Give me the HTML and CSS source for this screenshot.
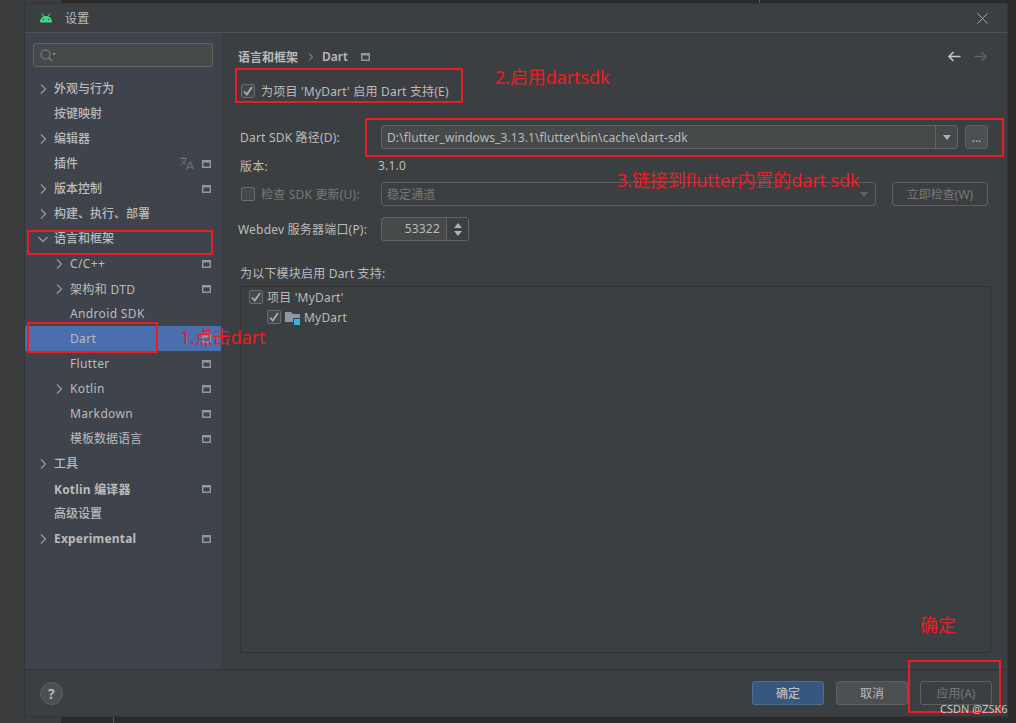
FILE: index.html
```html
<!DOCTYPE html>
<html lang="zh-CN">
<head>
    <meta charset="UTF-8">
    <title>设置</title>
    <link rel="stylesheet" href="styles.css">
</head>
<body>

<svg class="sprites" width="0" height="0">
    <symbol id="i-right" viewBox="0 0 10 10"><path d="M3 .5l4.500 4.500-4.500 4.500" fill="none" stroke="#9aa0a4" stroke-width="1.100"/></symbol>
    <symbol id="i-down" viewBox="0 0 10 10"><path d="M.5 3l4.500 4.500L9.500 3" fill="none" stroke="#9aa0a4" stroke-width="1.100"/></symbol>
    <symbol id="i-project" viewBox="0 0 9 8"><path fill="#8c98a3" fill-rule="evenodd" d="M0 0h9v8H0zM1.500 2.500V6.500h6V2.500z"/></symbol>
    <symbol id="i-check" viewBox="0 0 14 14"><path d="M3 7.500l2.800 3L11 3" fill="none" stroke="#a9adb0" stroke-width="1.800"/></symbol>
</svg>

<div class="dialog">
    <header class="titlebar">
        <svg class="android" width="14" height="10" viewBox="0 0 14 10">
            <path fill="#3ddc84" d="M1 9.500C1 5.500 3.500 3 7 3s6 2.500 6 6.500z"/>
            <path d="M3 .5l1.800 3M11 .5L9.200 3.500" stroke="#3ddc84" stroke-width="1"/>
            <circle cx="4.500" cy="6.500" r=".8" fill="#3c3f41"/><circle cx="9.500" cy="6.500" r=".8" fill="#3c3f41"/>
        </svg>
        <span class="title">设置</span>
        <svg class="close" width="11" height="11" viewBox="0 0 11 11"><path d="M.5.5l10 10M10.500.5l-10 10" stroke="#a8abad" stroke-width="1"/></svg>
    </header>

    <div class="body">
        <aside class="sidebar">
            <div class="search">
                <svg width="16" height="13" viewBox="0 0 16 13">
                    <circle cx="5.500" cy="5.500" r="4.500" fill="none" stroke="#7f8487" stroke-width="1.100"/>
                    <path d="M9 9l3 3" stroke="#7f8487" stroke-width="1.200"/>
                    <path d="M12 4h4l-2 2.500z" fill="#7f8487"/>
                </svg>
            </div>
            <ul class="tree">
                <li class="row top"><svg class="chev"><use href="#i-right"/></svg><span class="label zh">外观与行为</span></li>
                <li class="row top"><span class="chev"></span><span class="label zh">按键映射</span></li>
                <li class="row top"><svg class="chev"><use href="#i-right"/></svg><span class="label zh">编辑器</span></li>
                <li class="row top"><span class="chev"></span><span class="label zh">插件</span>
                    <svg class="translate" width="14" height="14" viewBox="0 0 14 14">
                        <path d="M0 2.500h7M3.500 1v1.500M6 2.500C5 6 3 8 .5 9M2 4.500c1 2 2.500 3.500 4 4" fill="none" stroke="#6e7478" stroke-width="1"/>
                        <path d="M6.500 13.500L9.700 6h.6l3.200 7.500M7.700 11.300h4.600" fill="none" stroke="#6e7478" stroke-width="1.100"/>
                    </svg>
                    <svg class="proj"><use href="#i-project"/></svg></li>
                <li class="row top"><svg class="chev"><use href="#i-right"/></svg><span class="label zh">版本控制</span><svg class="proj"><use href="#i-project"/></svg></li>
                <li class="row top"><svg class="chev"><use href="#i-right"/></svg><span class="label zh">构建、执行、部署</span></li>
                <li class="row top"><svg class="chev"><use href="#i-down"/></svg><span class="label zh">语言和框架</span></li>
                <li class="row sub"><svg class="chev"><use href="#i-right"/></svg><span class="label">C/C++</span><svg class="proj"><use href="#i-project"/></svg></li>
                <li class="row sub"><svg class="chev"><use href="#i-right"/></svg><span class="label">架构和 DTD</span><svg class="proj"><use href="#i-project"/></svg></li>
                <li class="row sub"><span class="chev"></span><span class="label">Android SDK</span></li>
                <li class="row sub selected"><span class="chev"></span><span class="label">Dart</span><svg class="proj"><use href="#i-project"/></svg></li>
                <li class="row sub"><span class="chev"></span><span class="label">Flutter</span><svg class="proj"><use href="#i-project"/></svg></li>
                <li class="row sub"><svg class="chev"><use href="#i-right"/></svg><span class="label">Kotlin</span><svg class="proj"><use href="#i-project"/></svg></li>
                <li class="row sub"><span class="chev"></span><span class="label">Markdown</span><svg class="proj"><use href="#i-project"/></svg></li>
                <li class="row sub"><span class="chev"></span><span class="label zh">模板数据语言</span><svg class="proj"><use href="#i-project"/></svg></li>
                <li class="row top"><svg class="chev"><use href="#i-right"/></svg><span class="label zh">工具</span></li>
                <li class="row top"><span class="chev"></span><span class="label strong">Kotlin 编译器</span><svg class="proj"><use href="#i-project"/></svg></li>
                <li class="row top"><span class="chev"></span><span class="label zh">高级设置</span></li>
                <li class="row top"><svg class="chev"><use href="#i-right"/></svg><span class="label strong">Experimental</span><svg class="proj"><use href="#i-project"/></svg></li>
            </ul>
        </aside>

        <main class="content">
            <div class="crumbs">
                <span>语言和框架</span>
                <svg class="crumb-sep" width="6" height="8" viewBox="0 0 6 8"><path d="M1 .5L4.500 4 1 7.500" fill="none" stroke="#9aa0a4"/></svg>
                <span>Dart</span>
                <svg class="proj crumb-proj"><use href="#i-project"/></svg>
                <span class="nav-arrows">
                    <svg width="14" height="11" viewBox="0 0 14 11"><path d="M13.500 5.500H2M6.500 1L2 5.500 6.500 10" fill="none" stroke="#c4c7c9" stroke-width="1.600"/></svg>
                    <svg width="14" height="11" viewBox="0 0 14 11"><path d="M.5 5.500H12M7.500 1L12 5.500 7.500 10" fill="none" stroke="#5d6164" stroke-width="1.600"/></svg>
                </span>
            </div>

            <label class="check-line enable">
                <span class="box"><svg width="14" height="14"><use href="#i-check"/></svg></span>
                为项目 'MyDart' 启用 Dart 支持(E)
            </label>

            <div class="form">
                <div class="form-label sdk-label">Dart SDK 路径(D):</div>
                <div class="sdk-field">
                    <div class="combo">
                        <span class="combo-text">D:\flutter_windows_3.13.1\flutter\bin\cache\dart-sdk</span>
                        <span class="combo-arrow"><i class="tri"></i></span>
                    </div>
                    <button class="dots">...</button>
                </div>

                <div class="form-label version-label">版本:</div>
                <div class="version">3.1.0</div>

                <label class="check-line form-label update off">
                    <span class="box"></span>
                    检查 SDK 更新(U):
                </label>
                <div class="sdk-field update-field">
                    <div class="combo off">
                        <span class="combo-text">稳定通道</span>
                        <span class="combo-arrow plain"><i class="tri"></i></span>
                    </div>
                    <button class="btn off check-now">立即检查(W)</button>
                </div>

                <div class="form-label port-label">Webdev 服务器端口(P):</div>
                <div class="spinner">
                    <span class="spin-value">53322</span>
                    <span class="spin-arrows"><i class="tri up"></i><i class="tri"></i></span>
                </div>
            </div>

            <div class="modules-title">为以下模块启用 Dart 支持:</div>
            <div class="modules">
                <label class="check-line mod">
                    <span class="box"><svg width="14" height="14"><use href="#i-check"/></svg></span>
                    项目 'MyDart'
                </label>
                <label class="check-line mod mod-child">
                    <span class="box"><svg width="14" height="14"><use href="#i-check"/></svg></span>
                    <svg class="folder" width="16" height="16" viewBox="0 0 16 16">
                        <path fill="#8c98a3" d="M0 3h6l2 2h7v8H0z"/>
                        <rect x="8" y="9" width="8" height="7" fill="#3c3f41"/>
                        <rect x="9" y="10" width="6" height="6" fill="#3bb1dc"/>
                    </svg>
                    MyDart
                </label>
            </div>
        </main>
    </div>

    <footer class="footer">
        <span class="help">?</span>
        <button class="btn primary">确定</button>
        <button class="btn">取消</button>
        <button class="btn off">应用(A)</button>
    </footer>
</div>

<!-- red marks drawn over the screenshot -->
<div class="mark mark-enable"></div>
<div class="mark mark-sdk"></div>
<div class="mark mark-lang"></div>
<div class="mark mark-dart"></div>
<div class="mark mark-apply"></div>
<div class="note note-1">1.点击dart</div>
<div class="note note-2">2.启用dartsdk</div>
<div class="note note-3">3.链接到flutter内置的dart sdk</div>
<div class="note note-4">确定</div>
<div class="watermark">CSDN @ZSK6</div>

</body>
</html>
```

FILE: styles.css
```css
* {
    box-sizing: border-box;
}

html, body {
    height: 100%;
}

body {
    margin: 0;
    padding: 4px 9px 7px 25px;
    overflow: hidden;
    background:
        linear-gradient(#55585a, #55585a) 113px 716px / 1px 7px no-repeat,
        linear-gradient(#55585a, #55585a) 759px 0 / 1px 4px no-repeat,
        linear-gradient(to right, #3a3c3e 61px, #2b2b2b 61px);
    font-family: "Noto Sans", "Noto Sans CJK SC", sans-serif;
    font-size: 12px;
    letter-spacing: .2px;
    color: #bbbbbb;
}

.sprites {
    position: absolute;
}

ul {
    list-style: none;
    margin: 0;
    padding: 0;
}

.dialog {
    height: 712px;
    display: flex;
    flex-direction: column;
    background-color: #3c3f41;
    box-shadow: 0 0 0 1px #333537;
}

.titlebar {
    height: 29px;
    flex: none;
    display: flex;
    align-items: center;
    padding: 0 19px 0 14px;
    border-bottom: 1px solid #505254;
}

.title {
    margin-left: 12px;
}

.close {
    margin-left: auto;
}

.body {
    flex: 1;
    display: flex;
    min-height: 0;
}

/* sidebar */
.sidebar {
    width: 196px;
    flex: none;
    padding-top: 10px;
    background-color: #3e434c;
}

.search {
    height: 24px;
    margin: 0 8px;
    padding: 5px 0 0 6px;
    border: 1px solid #646464;
    border-radius: 3px;
    background-color: #45494a;
}

.search svg {
    display: block;
}

.tree {
    margin-top: 9px;
}

.row {
    height: 25px;
    display: flex;
    align-items: center;
    padding-right: 10px;
    letter-spacing: .35px;
}

.top {
    padding-left: 13px;
    font-weight: 500;
}

.sub {
    padding-left: 29px;
}

.selected {
    background-color: #4b6eaf;
}

.chev {
    width: 10px;
    height: 10px;
    margin-right: 6px;
    flex: none;
}

.zh {
    margin-bottom: 2px;
    letter-spacing: 0;
}

.strong {
    font-weight: 700;
    letter-spacing: .2px;
}

.proj {
    width: 9px;
    height: 8px;
    margin-left: auto;
    flex: none;
}

.translate {
    margin-left: auto;
    margin-bottom: 2px;
}

.translate + .proj {
    margin-left: 8px;
}

/* right panel */
.content {
    flex: 1;
    min-width: 0;
    padding: 0 16px 16px 19px;
    display: flex;
    flex-direction: column;
}

.crumbs {
    height: 17px;
    margin: 15px 3px 0 -2px;
    display: flex;
    align-items: center;
    font-weight: 600;
    letter-spacing: 0;
}

.crumb-sep {
    margin: 0 8px 0 10px;
}

.crumb-proj {
    margin-left: 13px;
    margin-right: 0;
}

.nav-arrows {
    margin-left: auto;
    display: flex;
    gap: 13px;
}

.check-line {
    display: flex;
    align-items: center;
}

.box {
    width: 14px;
    height: 14px;
    flex: none;
    margin-right: 6px;
    border: 1px solid #6b6b6b;
    border-radius: 2px;
    background-color: #43494a;
}

.box svg {
    display: block;
    margin: -1px;
}

.enable {
    height: 20px;
    margin-top: 16px;
    padding-left: 1px;
}

.form {
    margin: 24px 3px 0 0;
    display: grid;
    grid-template-columns: 141px 1fr;
    align-items: center;
}

.sdk-field {
    display: flex;
    gap: 7px;
    height: 24px;
}

.combo {
    flex: 1;
    display: flex;
    align-items: center;
    border: 1px solid #646464;
    border-radius: 3px;
    background-color: #45494a;
    padding-left: 5px;
}

.combo-text {
    flex: 1;
    color: #bbbbbb;
    letter-spacing: .1px;
}

.combo-arrow {
    width: 22px;
    height: 100%;
    display: flex;
    align-items: center;
    justify-content: center;
    border-left: 1px solid #646464;
}

.combo-arrow.plain {
    border-left: 0;
}

.tri {
    display: block;
    width: 0;
    height: 0;
    border-left: 4px solid transparent;
    border-right: 4px solid transparent;
    border-top: 5px solid #aeb1b3;
}

.tri.up {
    border-top: 0;
    border-bottom: 5px solid #aeb1b3;
}

.dots {
    width: 23px;
    padding: 0;
    border: 1px solid #5e6060;
    border-radius: 3px;
    background-color: #4c5052;
    color: #bbbbbb;
    font: inherit;
}

.version-label,
.version {
    margin-top: 8px;
    height: 18px;
}

.version {
    margin-left: -3px;
}

.update {
    margin-top: 7px;
    padding-left: 1px;
}

.update-field {
    margin-top: 7px;
}

.off {
    color: #777777;
}

.combo.off {
    background: none;
    border-color: #5b5e60;
}

.combo.off .combo-text {
    color: #777777;
}

.combo.off .tri {
    border-top-color: #606365;
}

.port-label {
    margin: 11px 0 0 -2px;
}

.spinner {
    width: 88px;
    height: 24px;
    margin-top: 11px;
    display: flex;
    border: 1px solid #646464;
    border-radius: 3px;
    background-color: #45494a;
}

.spin-value {
    flex: 1;
    line-height: 22px;
    text-align: right;
    padding-right: 6px;
}

.spin-arrows {
    width: 22px;
    display: flex;
    flex-direction: column;
    align-items: center;
    justify-content: center;
    gap: 3px;
    border-left: 1px solid #646464;
    background-color: #3c3f41;
}

.modules-title {
    margin-top: 23px;
    height: 18px;
}

.modules {
    flex: 1;
    margin-top: 4px;
    padding: 0 0 0 8px;
    border: 1px solid #323232;
}

.mod {
    height: 20px;
}

.mod .box {
    margin-right: 4px;
}

.mod-child {
    padding-left: 18px;
}

.folder {
    margin-right: 3px;
}

/* footer */
.footer {
    height: 47px;
    flex: none;
    display: flex;
    align-items: center;
    gap: 12px;
    padding: 0 15px 0 15px;
    border-top: 1px solid #323232;
}

.help {
    width: 23px;
    height: 23px;
    margin-right: auto;
    border: 1px solid #5e6060;
    border-radius: 50%;
    background-color: #4c5052;
    text-align: center;
    line-height: 21px;
    font-size: 14px;
    font-weight: 700;
    color: #b4b6b8;
}

.btn {
    width: 72px;
    height: 24px;
    padding: 0;
    border: 1px solid #5e6060;
    border-radius: 3px;
    background-color: #4c5052;
    color: #bbbbbb;
    font: inherit;
}

.btn.primary {
    border-color: #4c708c;
    background-color: #365880;
    font-weight: 500;
}

.btn.off {
    background: none;
    color: #777777;
}

.btn.check-now {
    width: 96px;
    margin-left: 9px;
}

/* annotations */
.mark {
    position: absolute;
    border: 2px solid #ed1c24;
}

.mark-enable { left: 235px; top: 68px; width: 228px; height: 35px; }
.mark-sdk { left: 365px; top: 118px; width: 639px; height: 39px; }
.mark-lang { left: 27px; top: 230px; width: 186px; height: 25px; }
.mark-dart { left: 27px; top: 322px; width: 131px; height: 31px; }
.mark-apply { left: 908px; top: 660px; width: 93px; height: 53px; }

.note {
    position: absolute;
    color: #ed1c24;
    font-size: 18px;
    line-height: 24px;
    letter-spacing: -.1px;
    white-space: nowrap;
}

.note-1 { left: 180px; top: 325px; }
.note-2 { left: 495px; top: 65px; }
.note-3 { left: 617px; top: 168px; }
.note-4 { left: 920px; top: 613px; }

.watermark {
    position: absolute;
    left: 940px;
    top: 702px;
    font-size: 11px;
    line-height: 14px;
    letter-spacing: 0;
    color: #c8c8c8;
}
```
